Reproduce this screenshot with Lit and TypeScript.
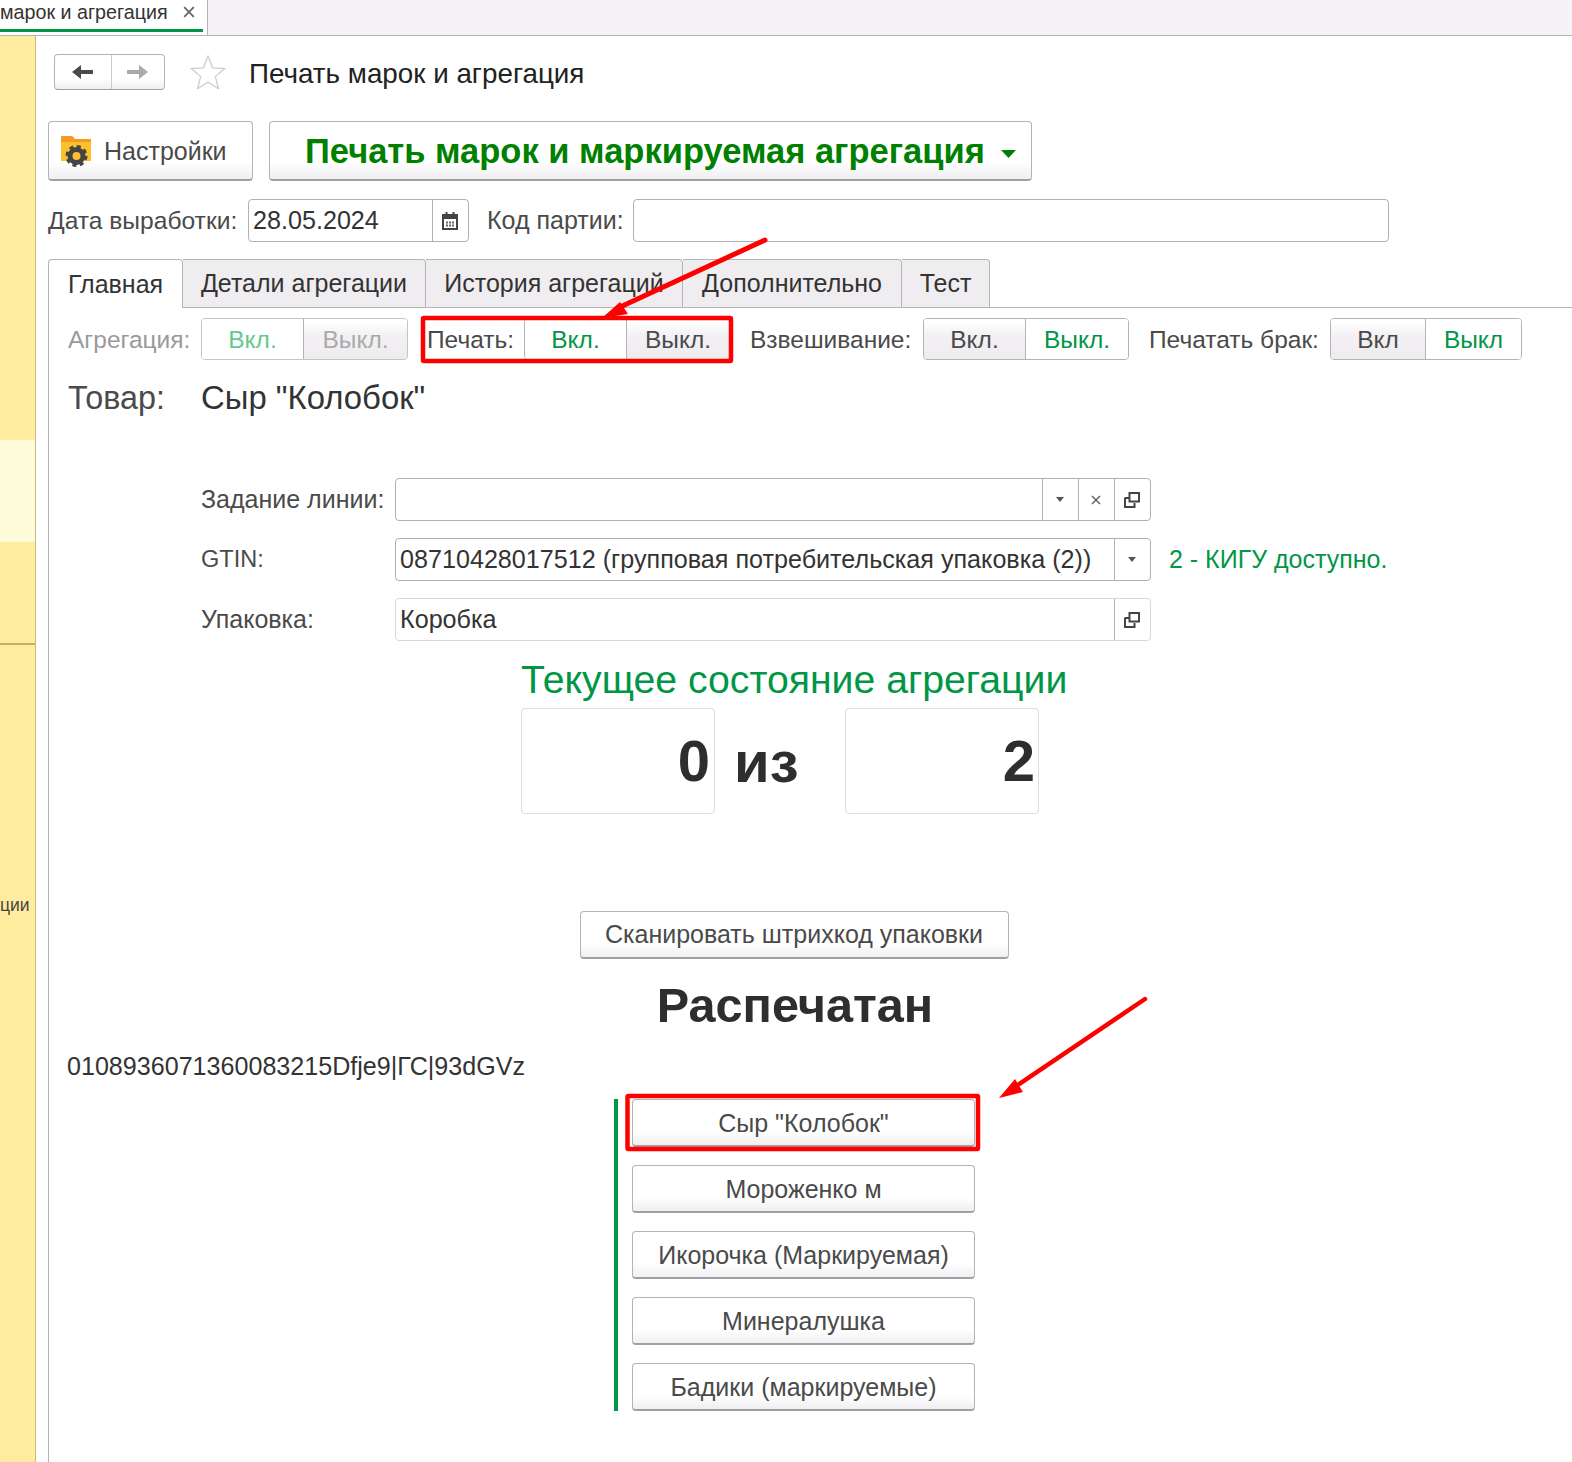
import { LitElement, html, css, svg } from "lit";
import { customElement } from "lit/decorators.js";

const openIcon = html`<svg class="ic" viewBox="0 0 16 16" width="16" height="16"><path d="M5.500 1h9.500v8.500h-9.500z M1 6h3.500 M1 5.500v9.500h9.500v-4" fill="none" stroke="#444" stroke-width="2"/></svg>`;
const tri = html`<svg class="ic" viewBox="0 0 8 5" width="8" height="5"><path d="M0 0h8L4 5z" fill="#555"/></svg>`;
const closeX = html`<svg class="ic" viewBox="0 0 10 10" width="10" height="10"><path d="M1 1l8 8M9 1l-8 8" stroke="#666" stroke-width="1.500"/></svg>`;
const calendar = html`<svg width="16" height="18" viewBox="0 0 16 18"><path d="M1 3h14v14H1z" fill="none" stroke="#444" stroke-width="2"/><path d="M1 3h14v4H1zM3.500 0h2v4h-2zM10.500 0h2v4h-2z" fill="#444"/><path d="M4 9.500h2v2H4zM7 9.500h2v2H7zM10 9.500h2v2h-2zM4 12.500h2v2H4zM7 12.500h2v2H7zM10 12.500h2v2h-2z" fill="#666"/></svg>`;

@customElement("app-root")
export class AppRoot extends LitElement {
  static styles = css`
    :host { display: block; width: 1572px; height: 1462px; overflow: hidden; position: relative; background: #fff;
      font-family: "Liberation Sans", Arial, sans-serif; color: #4a4a4a; font-size: 25px; }
    * { box-sizing: border-box; }
    .topbar { height: 36px; background: #f5f3f6; border-bottom: 1px solid #b4b4b4; display: flex; }
    .wintab { width: 208px; height: 35px; background: #fff; border-right: 1px solid #b4b4b4; position: relative;
      font-size: 19.700px; color: #333; line-height: 25px; white-space: nowrap; display: flex; align-items: flex-start; }
    .wintab span { flex: none; width: 183px; }
    .wintab .ic { margin-top: 6px; width: 12px; height: 12px; }
    .wintab::after { content: ""; position: absolute; left: 0; top: 29px; width: 203px; height: 3px; background: #009646; }
    .body { display: flex; height: 1426px; }
    .side { width: 36px; flex: none; background: #ffec9e; border-right: 1px solid #cbbb78; display: flex; flex-direction: column; }
    .side .n1 { height: 404px; }
    .side .sel { height: 102px; background: #fffcdc; }
    .side .n2 { height: 103px; border-bottom: 2px solid #c4ae62; }
    .side .item { font-size: 17.500px; line-height: 24px; color: #444; text-align: right; padding: 248px 6px 0 0; white-space: nowrap; overflow: hidden; }
    .main { flex: 1; padding-left: 12px; min-width: 0; display: flex; flex-direction: column; }
    .head { display: flex; align-items: center; margin: 18px 0 0 6px; height: 36px; }
    .nav { width: 111px; height: 36px; display: flex; border: 1px solid #b4b4b4; border-bottom-color: #a0a0a0; border-radius: 4px;
      background: linear-gradient(#fff 68%, #efedf0); flex: none; }
    .nav div { display: flex; align-items: center; justify-content: center; }
    .nav div:first-child { width: 56px; flex: none; }
    .nav div + div { flex: 1; border-left: 1px solid #ccc; padding-right: 3px; }
    .star { margin-left: 25px; }
    .title { margin-left: 23px; font-size: 27.800px; color: #222; white-space: nowrap; padding-top: 4px; }
    .cmd { display: flex; gap: 16px; margin-top: 31px; }
    .btn { display: flex; align-items: center; justify-content: center; white-space: nowrap; border: 1px solid #b4b4b4; border-bottom: 2px solid #a0a0a0;
      border-radius: 4px; background: linear-gradient(#fff 70%, #f0eef1); color: #4a4a4a; }
    .settings { width: 205px; height: 60px; justify-content: flex-start; padding: 2px 0 0 12px; }
    .settings svg { margin: -2px 12px 0 0; }
    .big { width: 763px; height: 60px; justify-content: flex-start; padding: 2px 0 0 35px; font-size: 34.500px; font-weight: 700; color: #008000; }
    .big svg { margin-left: 16px; margin-top: 4px; }
    .daterow { display: flex; align-items: center; height: 43px; margin-top: 18px; white-space: nowrap; }
    .field { height: 43px; display: flex; border: 1px solid #b0b0b0; border-radius: 4px; background: #fff; color: #333; flex: none; font-size: 25.150px; }
    .field.light { border-color: #d8d8d8; }
    .field .val { flex: 1; padding-left: 4px; line-height: 41px; white-space: nowrap; overflow: hidden; }
    .field .b { width: 36px; flex: none; border-left: 1px solid #b0b0b0; display: flex; align-items: center; justify-content: center; padding-right: 2px; }
    .datelabel { width: 200px; font-size: 24.600px; }
    .date { width: 221px; }
    .date .field { width: 221px; }
    .partylabel { width: 146px; margin-left: 18px; }
    .party { width: 756px; }
    .party .field { width: 756px; }
    .tabs { display: flex; height: 49px; margin-top: 17px; }
    .tab { height: 49px; border: 1px solid #b4b4b4; border-left: 0; border-radius: 0 4px 0 0; background: #efedf0; color: #333;
      display: flex; align-items: center; justify-content: center; white-space: nowrap; }
    .tab.on { background: #fff; border-left: 1px solid #b4b4b4; border-bottom: 0; border-radius: 4px 4px 0 0; width: 135px; }
    .tab.t2 { width: 243px; } .tab.t3 { width: 257px; } .tab.t4 { width: 219px; } .tab.t5 { width: 88px; }
    .tabfill { flex: 1; border-bottom: 1px solid #b4b4b4; }
    .panel { flex: 1; border-left: 1px solid #b4b4b4; padding: 10px 0 0 19px; display: flex; flex-direction: column; }
    .toggles { display: flex; align-items: center; height: 42px; white-space: nowrap; font-size: 24.500px; }
    .toggles span { padding-top: 2px; }
    .seg { display: flex; height: 42px; border: 1px solid #b4b4b4; border-radius: 4px; overflow: hidden; flex: none; }
    .seg div { display: flex; align-items: center; justify-content: center; padding-top: 2px; }
    .seg div + div { border-left: 1px solid #b4b4b4; }
    .seg .green { background: #fff; color: #009646; }
    .seg .gray { background: linear-gradient(#fff 8%, #f3f1f4 40%, #eeecef); color: #4a4a4a; }
    .seg.off { border-color: #c4c4c4; }
    .seg.off .green { color: #63c98e; }
    .seg.off .gray { color: #aaa; }
    .dim { color: #9a9a9a; }
    .lab1 { width: 133px; }
    .lab2 { width: 97px; margin-left: 19px; }
    .lab3 { width: 173px; margin-left: 20px; }
    .lab4 { width: 181px; margin-left: 20px; }
    .seg1 { width: 207px; } .seg1 div:first-child { width: 101px; } .seg1 div:last-child { flex: 1; }
    .seg2 { width: 206px; } .seg2 div:first-child { width: 101px; } .seg2 div:last-child { flex: 1; }
    .seg3 { width: 206px; } .seg3 div:first-child { width: 101px; } .seg3 div:last-child { flex: 1; }
    .seg4 { width: 192px; } .seg4 div:first-child { width: 94px; } .seg4 div:last-child { flex: 1; }
    .product { display: flex; align-items: baseline; margin-top: 19px; font-size: 32.900px; line-height: 38px; white-space: nowrap; }
    .product span:first-child { width: 133px; font-size: 32.300px; }
    .product span:last-child { color: #333; }
    .form { display: grid; grid-template-columns: 194px 756px auto; row-gap: 17px; margin: 61px 0 0 133px; align-items: center; }
    .gtin { font-size: 23.500px; }
    .note { color: #009646; margin-left: 18px; white-space: nowrap; }
    .state { width: 546px; margin-left: 453px; display: flex; flex-direction: column; align-items: center; }
    .state h2 { margin: 14px 0 3px; font-weight: 400; font-size: 39.200px; line-height: 50px; color: #009646; white-space: nowrap; align-self: flex-start; }
    .counter { display: flex; align-self: flex-start; }
    .box { width: 194px; height: 106px; border: 1px solid #ddd; border-radius: 4px; text-align: right; font-size: 58px; font-weight: 700; color: #2e2e2e; line-height: 103px; padding-right: 4px; }
    .box.last { padding-right: 3px; }
    .of { width: 130px; font-size: 58px; font-weight: 700; color: #2e2e2e; line-height: 108px; padding-left: 19px; }
    .scan { width: 429px; height: 48px; margin-top: 95px; }
    .printed { margin: 18px 0 0; font-size: 48.600px; line-height: 56px; font-weight: 700; color: #2e2e2e; white-space: nowrap; padding-left: 2px; }
    .code { margin: 18px 0 0 -1px; line-height: 30px; color: #333; white-space: nowrap; font-size: 25.100px; }
    .list { margin: 18px 0 0 546px; width: 361px; height: 312px; border-left: 4px solid #009646; padding-left: 14px; display: flex; flex-direction: column; gap: 18px; }
    .list .btn { width: 343px; height: 48px; flex: none; padding-top: 1px; }
    .notes { position: absolute; left: 0; top: 0; pointer-events: none; }
  `;

  private field(value: string, btns: unknown[], light = false) {
    return html`<div class="field ${light ? "light" : ""}"><div class="val">${value}</div>${btns.map((b) => html`<div class="b">${b}</div>`)}</div>`;
  }

  render() {
    return html`
      <div class="topbar"><div class="wintab"><span>марок и агрегация</span>${closeX}</div></div>
      <div class="body">
        <div class="side">
          <div class="n1"></div><div class="sel"></div><div class="n2"></div>
          <div class="item">ции</div>
        </div>
        <div class="main">
          <div class="head">
            <div class="nav">
              <div><svg width="22" height="16" viewBox="0 0 22 16"><path d="M0 8l9-7v5h12v4H9v5z" fill="#4a4a4a"/></svg></div>
              <div><svg width="22" height="16" viewBox="0 0 22 16"><path d="M22 8l-9-7v5H1v4h12v5z" fill="#aaa"/></svg></div>
            </div>
            <svg class="star" width="36" height="34" viewBox="0 0 36 34"><path d="M18 1l4.600 11.800 12.400.7-9.700 8 3.200 12.300L18 27l-10.500 6.800 3.200-12.300-9.700-8 12.400-.7z" fill="#fff" stroke="#c9ced6" stroke-width="1.300"/></svg>
            <div class="title">Печать марок и агрегация</div>
          </div>
          <div class="cmd">
            <div class="btn settings">
              <svg width="31" height="32" viewBox="0 0 31 32">
                <path d="M0 1h11l3 3h16v22H0z" fill="#fbc02d"/><path d="M0 1h11l3 3h16v3H0z" fill="#f79a1e"/>
                <circle cx="15.500" cy="21" r="6.500" fill="none" stroke="#444" stroke-width="5"/>
                <circle cx="15.500" cy="21" r="9.500" fill="none" stroke="#444" stroke-width="3" stroke-dasharray="4 3.460"/>
              </svg>
              Настройки
            </div>
            <div class="btn big">Печать марок и маркируемая агрегация<svg width="15" height="8" viewBox="0 0 15 8"><path d="M0 0h15L7.500 8z" fill="#008000"/></svg></div>
          </div>
          <div class="daterow">
            <span class="datelabel">Дата выработки:</span>
            <div class="date">${this.field("28.05.2024", [calendar])}</div>
            <span class="partylabel">Код партии:</span>
            <div class="party">${this.field("", [])}</div>
          </div>
          <div class="tabs">
            <div class="tab on">Главная</div>
            <div class="tab t2">Детали агрегации</div>
            <div class="tab t3">История агрегаций</div>
            <div class="tab t4">Дополнительно</div>
            <div class="tab t5">Тест</div>
            <div class="tabfill"></div>
          </div>
          <div class="panel">
            <div class="toggles">
              <span class="dim lab1">Агрегация:</span>
              <div class="seg seg1 off"><div class="green">Вкл.</div><div class="gray">Выкл.</div></div>
              <span class="lab2">Печать:</span>
              <div class="seg seg2"><div class="green">Вкл.</div><div class="gray">Выкл.</div></div>
              <span class="lab3">Взвешивание:</span>
              <div class="seg seg3"><div class="gray">Вкл.</div><div class="green">Выкл.</div></div>
              <span class="lab4">Печатать брак:</span>
              <div class="seg seg4"><div class="gray">Вкл</div><div class="green">Выкл</div></div>
            </div>
            <div class="product"><span>Товар:</span><span>Сыр "Колобок"</span></div>
            <div class="form">
              <span>Задание линии:</span>${this.field("", [tri, closeX, openIcon])}<span></span>
              <span class="gtin">GTIN:</span>${this.field("08710428017512 (групповая потребительская упаковка (2))", [tri])}<span class="note">2 - КИГУ доступно.</span>
              <span>Упаковка:</span>${this.field("Коробка", [openIcon], true)}<span></span>
            </div>
            <div class="state">
              <h2>Текущее состояние агрегации</h2>
              <div class="counter"><div class="box">0</div><div class="of">из</div><div class="box last">2</div></div>
              <div class="btn scan">Сканировать штрихкод упаковки</div>
              <div class="printed">Распечатан</div>
            </div>
            <div class="code">0108936071360083215Dfje9|ГС|93dGVz</div>
            <div class="list">
              <div class="btn">Сыр "Колобок"</div>
              <div class="btn">Мороженко м</div>
              <div class="btn">Икорочка (Маркируемая)</div>
              <div class="btn">Минералушка</div>
              <div class="btn">Бадики (маркируемые)</div>
            </div>
          </div>
        </div>
      </div>
      <svg class="notes" width="1572" height="1462" viewBox="0 0 1572 1462">
        ${svg`
          <rect x="423" y="318" width="308" height="43" rx="1" fill="none" stroke="#ff0000" stroke-width="4.500"/>
          <rect x="627.500" y="1096" width="350.500" height="53" rx="1" fill="none" stroke="#ff0000" stroke-width="4.500"/>
          <path d="M765 240L618 308" stroke="#ff0000" stroke-width="5" stroke-linecap="round"/>
          <path d="M602 318L620 302L628 314Z" fill="#ff0000"/>
          <path d="M1145 999L1015 1087" stroke="#ff0000" stroke-width="4.500" stroke-linecap="round"/>
          <path d="M999 1098L1015 1079L1023 1092Z" fill="#ff0000"/>
        `}
      </svg>
    `;
  }
}
